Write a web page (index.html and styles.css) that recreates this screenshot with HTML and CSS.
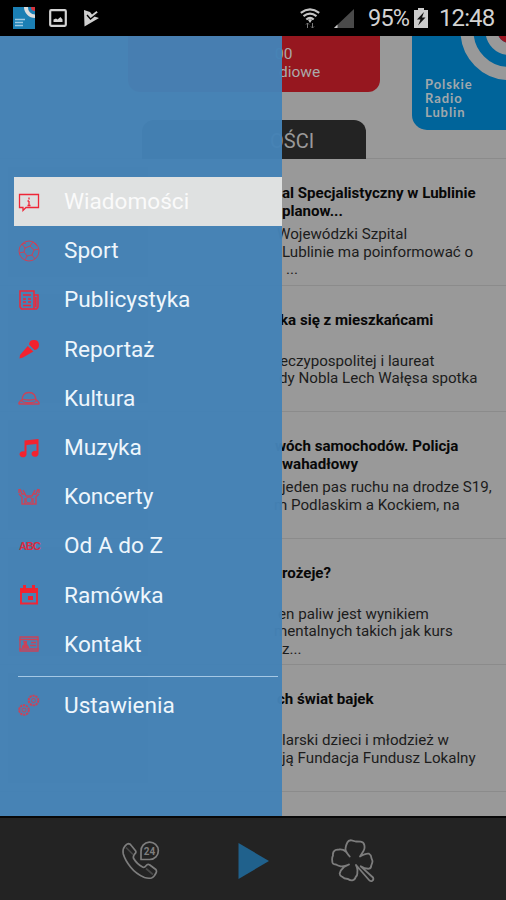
FILE: index.html
```html
<!DOCTYPE html>
<html lang="pl">
<head>
    <meta charset="UTF-8">
    <meta name="viewport" content="width=device-width, initial-scale=1.0">
    <title>Polskie Radio Lublin</title>
    <link rel="stylesheet" href="styles.css">
</head>
<body>
    <div class="status-bar">
        <div class="status-left">
            <svg width="22" height="22" viewBox="0 0 22 22">
                <rect width="22" height="22" fill="#1b7fb4"/>
                <path d="M11 0a11 11 0 0 0 11 11V7.500a7 7 0 0 1-7-7.500z" fill="#ddd"/>
                <path d="M18 0h4v4a4 4 0 0 1-4-4z" fill="#d8333c"/>
                <path d="M2 12.500h10M2 15.500h8M2 18.500h8" stroke="#9cc9e2" stroke-width="1.700"/>
            </svg>
            <svg class="picture-icon" width="18" height="18" viewBox="0 0 18 18">
                <rect x="1.200" y="1.200" width="15.600" height="15.600" rx="1" fill="none" stroke="#d4d4d4" stroke-width="2.200"/>
                <path d="M4.500 13V10.500l2.500-1 1.500 1 3-2.500 2 2.500V13z" fill="#d4d4d4"/>
            </svg>
            <svg class="check-icon" width="17" height="18" viewBox="0 0 17 18">
                <path d="M1 1l6 2 2 2.500L13.500 2l1.500 2-3.500 3.500 4.500 1.500L1.500 17.500z" fill="#d0d0d0"/>
                <path d="M4 6l3.500 4L15 4" fill="none" stroke="#000" stroke-width="1.300"/>
            </svg>
        </div>
        <div class="status-right">
            <svg class="wifi" width="20" height="20" viewBox="0 0 20 20">
                <g fill="none" stroke="#c4c4c4" stroke-width="2.200">
                    <path d="M.8 4.800Q10-2 19.200 4.800M3.500 8.200q6.500-5 13 0M6.300 11.500q3.700-3 7.400 0"/>
                </g>
                <path d="M8 12l2-1 2 1-2 3z" fill="#c4c4c4"/>
                <path d="M7.500 20v-5M6 16.500L7.500 15 9 16.500M12.500 15v5M11 18.500l1.500 1.500 1.500-1.500" stroke="#777" fill="none"/>
            </svg>
            <svg class="signal" width="20" height="19" viewBox="0 0 20 19">
                <path d="M20 0v19H0z" fill="#4a4a4a"/>
                <path d="M3.500 15.500V19H0z" fill="#ccc"/>
            </svg>
            <span class="percent">95%</span>
            <svg class="battery" width="14" height="20" viewBox="0 0 14 20">
                <path d="M4 0h6v2h4v18H0V2h4z" fill="#ccc"/>
                <path d="M10 4L3 11.500h3.500L4 17.500l7.500-8H8z" fill="#111"/>
            </svg>
            <span class="clock">12:48</span>
        </div>
    </div>

    <main class="page">
        <header class="top">
            <div class="phone-box">
                <p class="digits">00</p>
                <p>diowe</p>
            </div>
            <div class="logo">
                <svg class="rings" width="94" height="94" viewBox="0 0 94 94">
                    <g fill="none" stroke="#999">
                        <circle cx="97.500" cy="-5" r="42.500" stroke-width="13"/>
                        <circle cx="97.500" cy="-5" r="18" stroke-width="12"/>
                    </g>
                    <circle cx="97.500" cy="-5" r="12" fill="#991420"/>
                </svg>
                <div class="logo-name">
                    <div>Polskie</div>
                    <div>Radio</div>
                    <div>Lublin</div>
                </div>
            </div>
            <div class="tab">OŚCI</div>
        </header>

        <section class="news">
            <article>
                <div class="thumb"></div>
                <div class="text">
                    <h2><span class="s1">al Specjalistyczny w Lublinie</span><span class="s2">planow...</span></h2>
                    <p><span class="s3">Wojewódzki Szpital</span><span>Lublinie ma poinformować o</span><span class="s4">...</span></p>
                </div>
            </article>
            <article>
                <div class="thumb"></div>
                <div class="text">
                    <h2><span class="s5">ka się z mieszkańcami</span></h2>
                    <p><span class="s6">eczypospolitej i laureat</span><span class="s7">dy Nobla Lech Wałęsa spotka</span></p>
                </div>
            </article>
            <article>
                <div class="thumb"></div>
                <div class="text">
                    <h2><span class="s8">wóch samochodów. Policja</span><span class="s9">wahadłowy</span></h2>
                    <p><span class="s10">jeden pas ruchu na drodze S19,</span><span class="s11">m Podlaskim a Kockiem, na</span></p>
                </div>
            </article>
            <article>
                <div class="thumb"></div>
                <div class="text">
                    <h2><span class="s12">rożeje?</span></h2>
                    <p><span class="s13">en paliw jest wynikiem</span><span class="s14">mentalnych takich jak kurs</span><span class="s15">z...</span></p>
                </div>
            </article>
            <article>
                <div class="thumb"></div>
                <div class="text">
                    <h2><span class="s16">ch świat bajek</span></h2>
                    <p><span class="s17">larski dzieci i młodzież w</span><span class="s18">ją Fundacja Fundusz Lokalny</span></p>
                </div>
            </article>
        </section>

        <nav class="drawer">
            <a class="item active">
                <svg viewBox="0 0 22 22"><path d="M1.500 3.500h19v13H8l-3 3v-3H1.500zM11 6.500v2M11 10v5M9.500 10H11M9.500 14.500h3" stroke-width="1.300"/></svg>
                <span>Wiadomości</span>
            </a>
            <a class="item">
                <svg class="thin" viewBox="0 0 22 22"><circle cx="11" cy="11" r="10"/><path d="M7 8l5-2 4 4-2 5-5 1-3-4zM7 8L4 4M12 6l3-4M16 10l5-1M14 15l3 4M9 16l-2 4M6 12l-5 1M4 4l4-1M15 2l4 4"/></svg>
                <span>Sport</span>
            </a>
            <a class="item">
                <svg viewBox="0 0 22 22"><path d="M2 2h14v18H3.500L2 18zM16 6h4v12l-1.500 2H16M17.800 8v10M5 6h8M5 10h3M10 10h3M5 13h3M10 13h3M5 16.500h8" stroke-width="1.500"/></svg>
                <span>Publicystyka</span>
            </a>
            <a class="item">
                <svg class="solid" viewBox="0 0 22 22"><path d="M11 6.500A5 5 0 1 1 16.500 12zM9.800 8l5.500 5.500L5 19.500l-3.500 1L2 17z"/></svg>
                <span>Reportaż</span>
            </a>
            <a class="item">
                <svg class="thin" viewBox="0 0 22 22"><path d="M4 14.500C4 8 6.500 5.500 11 5.500s7 2.500 7 9M4 12q7 2 14 0M4 12.500Q-1 17 2 17h18q3 0-2-4.500M4 14.500q7 2.500 14 0" stroke-width="1.300"/></svg>
                <span>Kultura</span>
            </a>
            <a class="item">
                <svg class="solid" viewBox="0 0 22 22"><path d="M6.500 3.500L20.500 2v15a3.500 3 0 1 1-2-3V7L8.500 8v9.500a3.500 3 0 1 1-2-3z"/></svg>
                <span>Muzyka</span>
            </a>
            <a class="item">
                <svg class="thin" viewBox="0 0 22 22"><path d="M2 3l2 5h3l1 2h6l1-2h3l2-5M1 8l3 3v7h14v-7l3-3M5 4l2 4M17 4l-2 4M1 3v4M21 3v4M7 18v-6M15 18v-6" stroke-width="1.400"/><circle cx="11" cy="14" r="3"/></svg>
                <span>Koncerty</span>
            </a>
            <a class="item">
                <i class="abc">ABC</i>
                <span>Od A do Z</span>
            </a>
            <a class="item">
                <svg viewBox="0 0 22 22"><path d="M3 5h16v14.500H3z" stroke-width="2"/><path class="fill" d="M2 4h18v5H2zM5 1h3v4H5zM14 1h3v4h-3zM10 12h5v4h-5z"/></svg>
                <span>Ramówka</span>
            </a>
            <a class="item">
                <svg class="card" viewBox="0 0 22 22"><path d="M2 4h18v14H2zM1 6.500h20M1 16h20M13 9.500h5M12 12.500h6" stroke-width="1.300"/><path class="fill" d="M5 8h4v3l2 3v1H4v-2l2-2z"/></svg>
                <span>Kontakt</span>
            </a>
            <hr>
            <a class="item">
                <svg class="thin" viewBox="0 0 22 22"><circle cx="15.500" cy="6.500" r="4.800" stroke-width="2" stroke-dasharray="2.200 .8"/><circle cx="15.500" cy="6.500" r="2"/><circle cx="6" cy="16" r="4.800" stroke-width="2" stroke-dasharray="2.200 .8"/><circle cx="6" cy="16" r="2"/></svg>
                <span>Ustawienia</span>
            </a>
        </nav>
    </main>

    <footer class="player">
        <svg width="38" height="40" viewBox="0 0 38 40">
            <g fill="none" stroke="#7d7d7d" stroke-width="1.700" stroke-linejoin="round">
                <path d="M1.500 7.500Q4 3 6.500 2.700q1.500 0 3 2l4 5q1 1.500-.5 3-2.200 2.300-1.500 4.500 3.500 6 9.500 9 1.500.5 3-1.500 1.500-2 3.500-1l6 4.500q1.500 1.500.7 3.500-2 4.500-4.700 5.300-3.500.7-7-.5Q14 33 8.500 26 3 19 1.300 13q-.6-3.500.2-5.500z"/>
                <path d="M4 6.500l7 7M24 27.500l7 6" stroke="#484848"/>
                <path d="M19 18.500v-8a8.700 8.700 0 1 1 8.700 8z"/>
            </g>
            <text x="27.600" y="13.700" text-anchor="middle">24</text>
        </svg>
        <svg width="31" height="36" viewBox="0 0 31 36">
            <path d="M.5 0L31 18 .5 36z" fill="#20618c"/>
        </svg>
        <svg width="44" height="44" viewBox="0 0 44 44">
            <path d="M18.700 17.500Q14 12 14.500 9.500 15 6 16.300 3.500 17.500 1 20.500 1.300l4.200 1.200 5 .2q3 .5 3.600 3.300.8 3.500-.8 6L29 17.500q6-3.500 9-2.800 2.500 1.500 2.300 4l1.200 3.300q0 2-1.200 4.300-.3 3-2.300 3.400-4 .3-8.300-2.400L42 38.500q1 2-.8 3.300-2 .8-3.200-.8L25 26q2 4 1.300 7 .5 3-1.600 5-.7 3-3.400 3.300-2.500.2-4.300-1.300-4 0-6-2.300-2.500-1.200-2.300-3.200Q9.500 31 13 28l5-2.500q-5 2.300-8.300 1.800Q6.500 26.500 5 25.500 1 25.500 1.300 22 .7 19 2 16.500q-.5-4 2.500-5.500 2-.5 3.500-.5 4-.5 6.700 2z" fill="none" stroke="#7d7d7d" stroke-width="1.800" stroke-linejoin="round"/>
        </svg>
    </footer>
</body>
</html>
```

FILE: styles.css
```css
* {
    box-sizing: border-box;
}

body {
    margin: 0;
    width: 506px;
    height: 900px;
    overflow: hidden;
    background-color: #000;
    font-family: Roboto, "Liberation Sans", sans-serif;
    display: flex;
    flex-direction: column;
}

h2, p {
    margin: 0;
}

.status-bar {
    height: 36px;
    display: flex;
    justify-content: space-between;
    align-items: center;
    padding: 0 12px 0 13px;
    color: #d2d2d2;
    font-size: 24px;
}

.status-left, .status-right {
    display: flex;
    align-items: center;
}

.picture-icon {
    margin-left: 14px;
}

.check-icon {
    margin-left: 16px;
}

.wifi {
    margin-right: 1px;
}

.signal {
    margin: 0 14px 0 13px;
}

.battery {
    margin: 0 11px 0 5px;
}

.percent {
    width: 41px;
    font-size: 23.5px;
    letter-spacing: -0.8px;
}

.clock {
    width: 55px;
    white-space: nowrap;
    letter-spacing: -0.9px;
}

.page {
    position: relative;
    height: 780px;
    overflow: hidden;
    background-color: #999;
}

.top {
    height: 123px;
    display: grid;
    grid-template-columns: 252px 94px;
    grid-template-rows: 84px 39px;
    column-gap: 32px;
    padding-left: 128px;
    border-bottom: 1px solid #8b8b8b;
}

.phone-box {
    height: 56px;
    padding: 9px 0 0 151px;
    border-radius: 0 0 12px 12px;
    background-color: #96171f;
    color: #aaa;
    font-size: 15.5px;
    line-height: 18px;
}

.digits {
    margin-left: -4px;
}

.logo {
    grid-row: 1 / 3;
    grid-column: 2;
    height: 94px;
    display: grid;
    border-radius: 0 0 0 15px;
    background-color: #00649a;
    overflow: hidden;
}

.rings, .logo-name {
    grid-area: 1 / 1;
}

.logo-name {
    padding: 41px 0 0 13px;
    color: #a0a8ac;
    font: bold 13px/14px Lato, sans-serif;
    letter-spacing: 0.9px;
}

.tab {
    grid-row: 2;
    grid-column: 1;
    width: 224px;
    height: 39px;
    margin-left: 14px;
    padding-left: 128px;
    border-radius: 12px 12px 0 0;
    background-color: #232323;
    color: #999;
    font-size: 20px;
    line-height: 43px;
}

article {
    height: 126.5px;
    display: grid;
    grid-template-columns: 140px 1fr;
    column-gap: 133px;
    padding-left: 8px;
    border-bottom: 1px solid #8b8b8b;
}

.thumb {
    margin: 8px 0;
    background-color: #888;
}

.text {
    padding: 26px 0 0 1px;
    color: #1c1c1c;
    font-size: 15.15px;
    line-height: 17.6px;
}

.text span {
    display: block;
    white-space: nowrap;
}

h2 {
    height: 41px;
    font-size: 15.1px;
    font-weight: bold;
    line-height: 17.6px;
    color: #080808;
}

p .s3 { margin-left: -5px; }
p .s4 { margin-left: 4px; }
h2 .s5, p .s6 { margin-left: -2px; }
p .s7 { margin-left: -3px; }
h2 .s8 { margin-left: -7px; }
h2 .s16 { margin-left: -5px; }
p .s11, p .s14 { margin-left: -8px; }
p .s13 { margin-left: -4px; }

.drawer {
    position: absolute;
    top: 0;
    left: 0;
    width: 282px;
    height: 780px;
    padding-top: 141px;
    background-color: rgba(68, 130, 182, 0.97);
}

.item {
    height: 49.2px;
    margin-left: 14px;
    display: flex;
    align-items: center;
    color: #eef6fc;
    font-size: 22.6px;
}

.item svg, .abc {
    width: 22px;
    height: 22px;
    margin: 0 24px 0 4px;
    fill: none;
    stroke: #ee2738;
}

.item svg.thin, .item svg.card {
    stroke: #c94359;
}

.item svg.solid, .item .fill {
    fill: #f3222f;
    stroke: none;
}

.item .card .fill {
    fill: #c94359;
}

.abc {
    color: #d92b42;
    font: bold 11px/22px "Liberation Sans", sans-serif;
    letter-spacing: -1px;
    padding-left: 1px;
}

.active {
    background-color: #dfe1e1;
    color: #fafafa;
}

.drawer hr {
    height: 1px;
    margin: 7px 4px 4px 18px;
    border: 0;
    background-color: #a5c8e5;
}

.player {
    height: 84px;
    display: flex;
    align-items: center;
    padding: 4px 0 0 122px;
    border-top: 2px solid #080808;
    background-color: #232323;
}

.player svg + svg {
    margin-left: 78px;
}

.player svg:last-child {
    margin-left: 62px;
}

.player text {
    fill: #7d7d7d;
    font-size: 10px;
    font-weight: bold;
}
```
